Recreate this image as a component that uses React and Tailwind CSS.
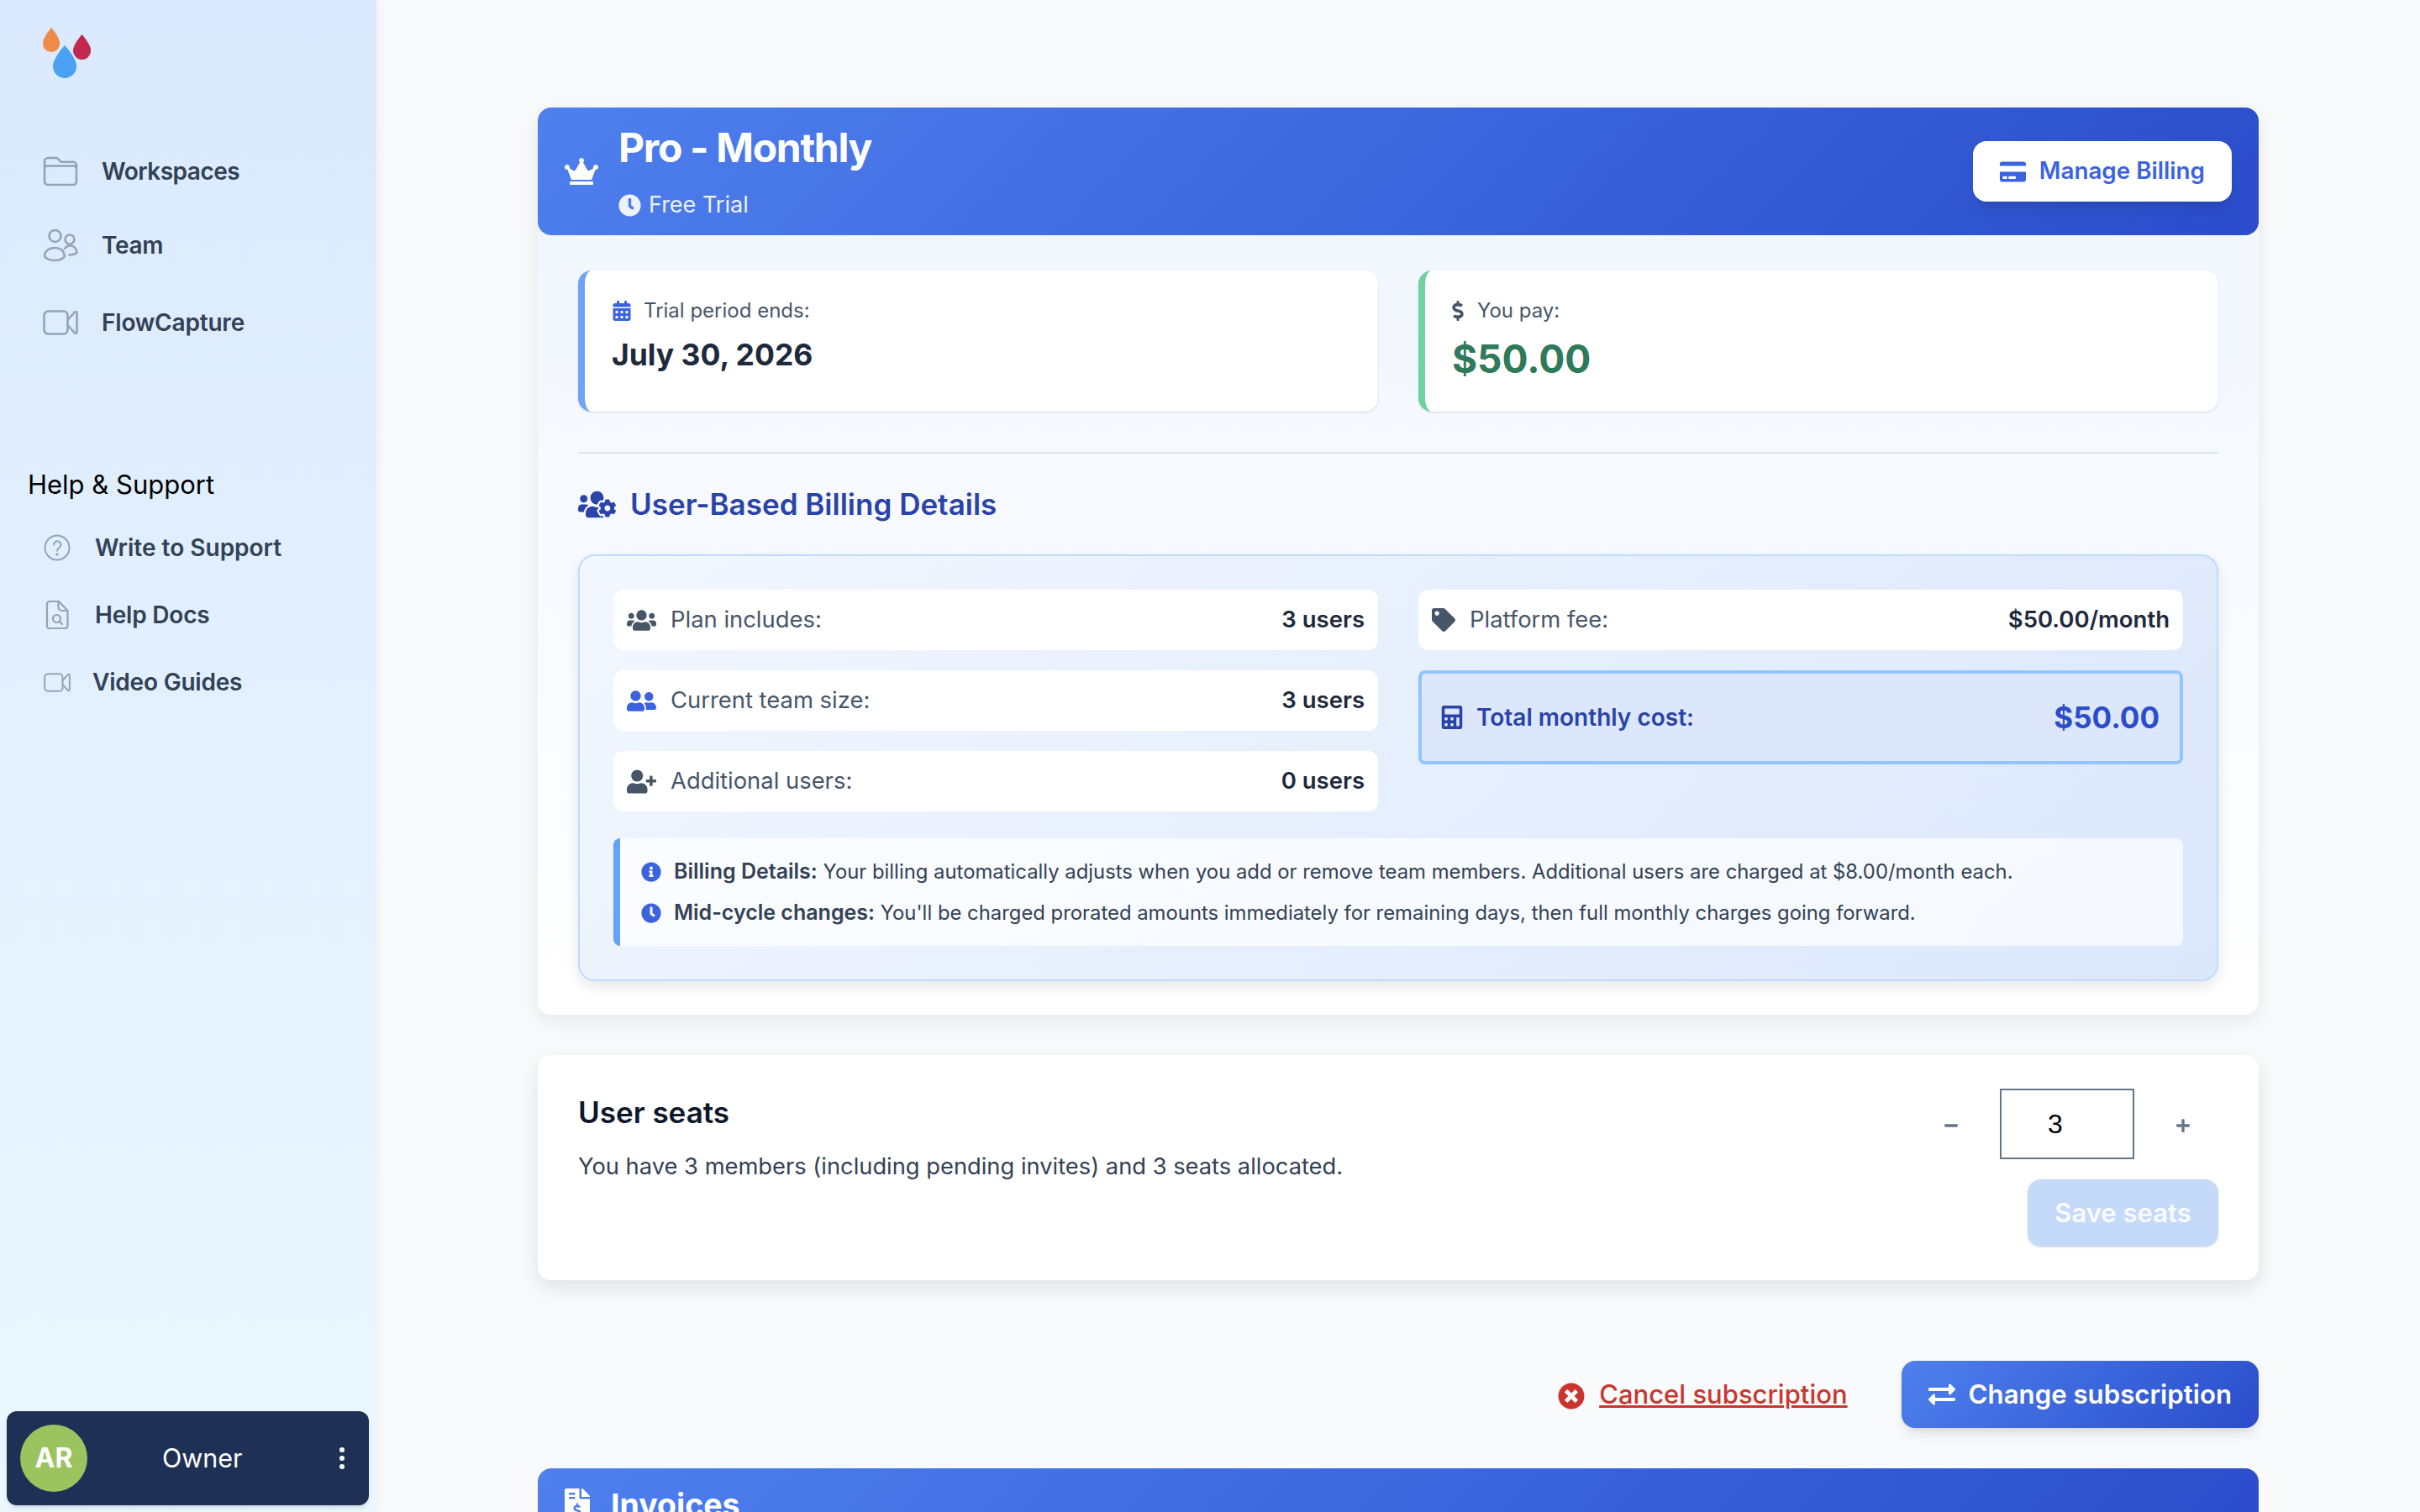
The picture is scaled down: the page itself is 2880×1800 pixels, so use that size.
import React from "react";
import {
  FaCrown,
  FaClock,
  FaCreditCard,
  FaCalendarAlt,
  FaDollarSign,
  FaUsersCog,
  FaUsers,
  FaUserFriends,
  FaUserPlus,
  FaTag,
  FaCalculator,
  FaInfoCircle,
  FaTimesCircle,
  FaExchangeAlt,
  FaFileInvoiceDollar,
  FaMinus,
  FaPlus,
} from "react-icons/fa";

const Logo = () => {
  const drop = "M12 0C12 0 24 13 24 21A12 12 0 0 1 0 21C0 13 12 0 12 0Z";
  return (
    <svg width="57" height="60" viewBox="0 0 57 60">
      <path d={drop} fill="#ef8a47" transform="translate(0 0) scale(0.84 0.88)" />
      <path d={drop} fill="#c32850" transform="translate(36 8) scale(0.88 0.91)" />
      <path d={drop} fill="#4aa0f2" transform="translate(12 21) scale(1.17 1.18)" />
    </svg>
  );
};

const FolderIcon = () => (
  <svg width="42" height="36" viewBox="0 0 42 36" fill="none" stroke="#94a3b8" strokeWidth="2.6" strokeLinejoin="round">
    <path d="M2 30V6a4 4 0 0 1 4-4h9.5a4 4 0 0 1 3 1.4l3 3.4H36a4 4 0 0 1 4 4V30a4 4 0 0 1-4 4H6a4 4 0 0 1-4-4Z" />
    <path d="M2 14.5a3 3 0 0 1 3-3h32a3 3 0 0 1 3 3" />
  </svg>
);

const TeamIcon = () => (
  <svg width="42" height="40" viewBox="0 0 42 40" fill="none" stroke="#94a3b8" strokeWidth="2.6">
    <circle cx="14.5" cy="9" r="7" />
    <circle cx="32" cy="13" r="5.5" />
    <path d="M2 33c0-6 5.500-10 12.500-10S25 27 26 33c-2 3-7 5-12 5S3.500 36 2 33Z" strokeLinejoin="round" />
    <path d="M25.500 25c1.500-3 4-4.500 7-4.500 4 0 7.500 3 8 8-1.500 2-4.500 3-10 3" strokeLinejoin="round" />
  </svg>
);

const VideoIcon = ({ w = 42, h = 30 }) => (
  <svg width={w} height={h} viewBox="0 0 42 30" fill="none" stroke="#94a3b8" strokeWidth="2.6" strokeLinejoin="round">
    <rect x="1.500" y="1.500" width="28" height="27" rx="5" />
    <path d="M29.500 12 38 2.500c1-.8 2.500-.3 2.500 1v23c0 1.300-1.500 1.800-2.500 1L29.500 18" />
  </svg>
);

const HelpIcon = () => (
  <svg width="32" height="32" viewBox="0 0 32 32" fill="none" stroke="#94a3b8" strokeWidth="2">
    <circle cx="16" cy="16" r="14.500" />
    <path d="M11.800 12.500a4.300 4.300 0 1 1 6.500 3.700c-1.500.9-2.300 1.800-2.300 3.600" strokeLinecap="round" />
    <circle cx="16" cy="24" r="0.700" fill="#94a3b8" />
  </svg>
);

const DocSearchIcon = () => (
  <svg width="28" height="34" viewBox="0 0 28 34" fill="none" stroke="#94a3b8" strokeWidth="2.2" strokeLinejoin="round">
    <path d="M2 4a3 3 0 0 1 3-3h11l10.500 11v18a3 3 0 0 1-3 3H4.500A2.500 2.500 0 0 1 2 30.500Z" />
    <path d="M15.500 1.500V8a4 4 0 0 0 4 4h7" />
    <circle cx="13.500" cy="21.500" r="4.500" />
    <path d="m17 25 3 3" strokeLinecap="round" />
  </svg>
);

const NavItem = ({ icon, label, className = "" }) => (
  <div className={`flex h-10 items-center text-[28px] font-semibold text-[#334155] ${className}`}>
    {icon}
    <span>{label}</span>
  </div>
);

const Row = ({ icon, label, value, iconClass = "text-[#475569]" }) => (
  <div className="flex h-[72px] items-center rounded-xl bg-white pl-4 pr-4">
    <span className={`flex ${iconClass}`}>{icon}</span>
    <span className="ml-[17px] text-[27.4px] text-[#475569]">{label}</span>
    <span className="ml-auto text-[27.5px] font-semibold text-[#1e293b]">{value}</span>
  </div>
);

export default function App() {
  return (
    <div className="flex h-screen overflow-hidden bg-[#f9fafc] font-['Inter',sans-serif]">
      {/* Sidebar */}
      <aside className="flex w-[448px] shrink-0 flex-col bg-linear-to-b from-[#dae9fd] to-[#ecf8ff] shadow-[0_0_16px_rgba(15,23,42,0.06)]">
        <div className="ml-[51px] mt-[33px]">
          <Logo />
        </div>
        <nav className="ml-[51px] mt-[91px] flex flex-col">
          <NavItem icon={<FolderIcon />} label={<span className="ml-7 tracking-[-0.5px]">Workspaces</span>} />
          <NavItem className="mt-12" icon={<TeamIcon />} label={<span className="ml-7 tracking-[-0.3px]">Team</span>} />
          <NavItem className="mt-[52px]" icon={<VideoIcon />} label={<span className="ml-7 tracking-[-0.2px]">FlowCapture</span>} />
        </nav>
        <h3 className="ml-[33px] mt-[153px] text-[31px] leading-10 text-black">Help &amp; Support</h3>
        <nav className="ml-[52px] mt-[35px] flex flex-col gap-10">
          <NavItem icon={<HelpIcon />} label={<span className="ml-[29px]">Write to Support</span>} />
          <NavItem
            icon={
              <span className="flex w-8 justify-center">
                <DocSearchIcon />
              </span>
            }
            label={<span className="ml-[29px] tracking-[-0.2px]">Help Docs</span>}
          />
          <NavItem icon={<VideoIcon w={32} h={23} />} label={<span className="ml-[26px] tracking-[-0.2px]">Video Guides</span>} />
        </nav>
        <div className="mb-2 ml-2 mt-auto flex h-28 w-[431px] items-center rounded-xl bg-[#1e3055] pl-4 shadow-md">
          <div className="flex h-20 w-20 items-center justify-center rounded-full bg-[#9bc45f] text-[32px] font-bold text-white">
            AR
          </div>
          <span className="ml-[89px] text-[30.5px] text-white">Owner</span>
          <div className="ml-auto mr-[29px] flex flex-col gap-1">
            <span className="h-1.5 w-1.5 rounded-full bg-white" />
            <span className="h-1.5 w-1.5 rounded-full bg-white" />
            <span className="h-1.5 w-1.5 rounded-full bg-white" />
          </div>
        </div>
      </aside>

      {/* Main */}
      <main className="flex-1 overflow-hidden">
        <div className="mx-auto w-[2048px] pt-32">
          {/* Plan card */}
          <section className="rounded-2xl bg-linear-to-b from-[#f0f5fe] to-white shadow-[0_8px_24px_rgba(15,23,42,0.08)]">
            <header className="flex h-[152px] items-center rounded-2xl bg-linear-135 from-[#4f80ee] to-[#2b4ccb] px-8">
              <FaCrown className="text-[40px] text-white" />
              <div className="ml-6 mt-[2px]">
                <h2 className="text-[48px] leading-[56px] font-bold tracking-[-1.3px] text-white">Pro - Monthly</h2>
                <div className="mt-[22px] flex h-9 items-center gap-[9px] text-[27px] text-white/90">
                  <FaClock className="text-[27px]" />
                  <span>Free Trial</span>
                </div>
              </div>
              <button className="ml-auto flex h-[72px] items-center gap-4 rounded-2xl bg-white px-8 text-[27.8px] font-semibold text-[#3b63e0] shadow-lg">
                <FaCreditCard className="text-[31px]" />
                Manage Billing
              </button>
            </header>

            <div className="px-12 pb-10 pt-[42px]">
              <div className="grid grid-cols-2 gap-12 pb-12">
                <div className="h-[168px] rounded-2xl border-l-8 border-[#6ea4f8] bg-white pl-[32px] pt-8 shadow-sm">
                  <div className="flex h-8 items-center gap-[14px] text-[24px] text-[#475569]">
                    <FaCalendarAlt className="text-[24px] text-[#3b63e0]" />
                    <span>Trial period ends:</span>
                  </div>
                  <div className="mt-[17px] text-[35.5px] leading-10 font-bold text-[#1e293b]">July 30, 2026</div>
                </div>
                <div className="h-[168px] rounded-2xl border-l-8 border-[#6ed3a0] bg-white pl-[27px] pt-8 shadow-sm">
                  <div className="flex h-8 items-center gap-[11px] text-[24px] text-[#475569]">
                    <FaDollarSign className="text-[24px] text-[#475569]" />
                    <span>You pay:</span>
                  </div>
                  <div className="ml-[5px] mt-[13px] text-[46px] leading-14 font-bold text-[#2f7a5b]">$50.00</div>
                </div>
              </div>

              <div className="border-t-2 border-[#dde5f0] pt-[38px]">
                <h3 className="flex h-11 items-center gap-[17px] text-[35px] font-semibold text-[#2a43a8]">
                  <FaUsersCog className="text-[45px]" />
                  User-Based Billing Details
                </h3>
              </div>

              <div className="mt-[38px] rounded-[20px] border-2 border-[#bfdbfe] bg-linear-135 from-[#f2f7ff] to-[#dbe7fb] p-10 shadow-[0_6px_16px_rgba(15,23,42,0.1)]">
                <div className="grid grid-cols-2 gap-12">
                  <div className="flex flex-col gap-6">
                    <Row icon={<FaUsers className="text-[35px]" />} label="Plan includes:" value="3 users" />
                    <Row icon={<FaUserFriends className="text-[35px]" />} label="Current team size:" value="3 users" iconClass="text-[#3b63e0]" />
                    <Row icon={<FaUserPlus className="text-[35px]" />} label="Additional users:" value="0 users" />
                  </div>
                  <div className="flex flex-col gap-6">
                    <Row icon={<FaTag className="text-[28px]" />} label="Platform fee:" value="$50.00/month" />
                    <div className="flex h-28 items-center rounded-lg border-4 border-[#93c5fd] bg-[#dce7fb] pl-[22px] pr-6">
                      <FaCalculator className="text-[28px] text-[#2a43a8]" />
                      <span className="ml-[15px] text-[28px] font-semibold text-[#2a43a8]">Total monthly cost:</span>
                      <span className="ml-auto text-[35px] font-bold text-[#2c4dc9]">$50.00</span>
                    </div>
                  </div>
                </div>

                <div className="mt-8 flex h-32 flex-col justify-center gap-3 rounded-lg border-l-8 border-[#60a5fa] bg-white/70 pl-[25px] text-[23.85px] leading-9 text-[#334155]">
                  <p className="flex items-center">
                    <FaInfoCircle className="mr-[15px] text-[24px] text-[#3b63e0]" />
                    <span>
                      <strong className="text-[25px] font-semibold">Billing Details:</strong> Your billing automatically adjusts when you add or
                      remove team members. Additional users are charged at $8.00/month each.
                    </span>
                  </p>
                  <p className="flex items-center">
                    <FaClock className="mr-[15px] text-[24px] text-[#3b63e0]" />
                    <span>
                      <strong className="text-[25px] font-semibold">Mid-cycle changes:</strong> You'll be charged prorated amounts immediately for
                      remaining days, then full monthly charges going forward.
                    </span>
                  </p>
                </div>
              </div>
            </div>
          </section>

          {/* Seats */}
          <section className="mt-12 flex h-[268px] justify-between rounded-2xl bg-white px-12 py-10 shadow-[0_10px_24px_rgba(15,23,42,0.1)]">
            <div>
              <h3 className="text-[35px] font-semibold leading-14 text-[#0f172a]">User seats</h3>
              <p className="mt-[17px] text-[27.3px] leading-10 text-[#334155]">
                You have 3 members (including pending invites) and 3 seats allocated.
              </p>
            </div>
            <div className="flex flex-col items-end gap-6">
              <div className="flex items-center">
                <FaMinus className="mt-[3px] text-[18px] text-[#64748b]" />
                <input
                  readOnly
                  value="3"
                  className="mx-[49px] h-[84px] w-40 border-2 border-[#64748b] bg-white pl-[55px] font-['Liberation_Sans',sans-serif] text-[32px] text-black"
                />
                <FaPlus className="mr-[33px] mt-[3px] text-[18px] text-[#64748b]" />
              </div>
              <button className="h-20 w-[227px] rounded-2xl bg-[#c5d9f9] text-[31px] font-semibold text-white/90 shadow-sm">
                Save seats
              </button>
            </div>
          </section>

          {/* Actions */}
          <div className="mt-24 flex items-center justify-end">
            <a className="text-[31px] font-medium text-[#c8362d] underline">
              <FaTimesCircle className="mr-[17px] inline text-[32px]" />
              Cancel subscription
            </a>
            <button className="ml-16 flex h-20 items-center gap-4 rounded-2xl bg-linear-135 from-[#4f80ee] to-[#2b4ccb] px-8 text-[31.2px] font-semibold text-white shadow-lg">
              <FaExchangeAlt className="text-[32px]" />
              Change subscription
            </button>
          </div>

          {/* Invoices */}
          <section className="mt-12 rounded-t-2xl bg-linear-135 from-[#4f80ee] to-[#2b4ccb] pb-10 pl-[27px] pr-8 pt-6">
            <h2 className="flex items-center gap-5 text-[37.5px] leading-10 font-bold text-white">
              <FaFileInvoiceDollar className="text-[40px]" />
              Invoices
            </h2>
          </section>
        </div>
      </main>
    </div>
  );
}
